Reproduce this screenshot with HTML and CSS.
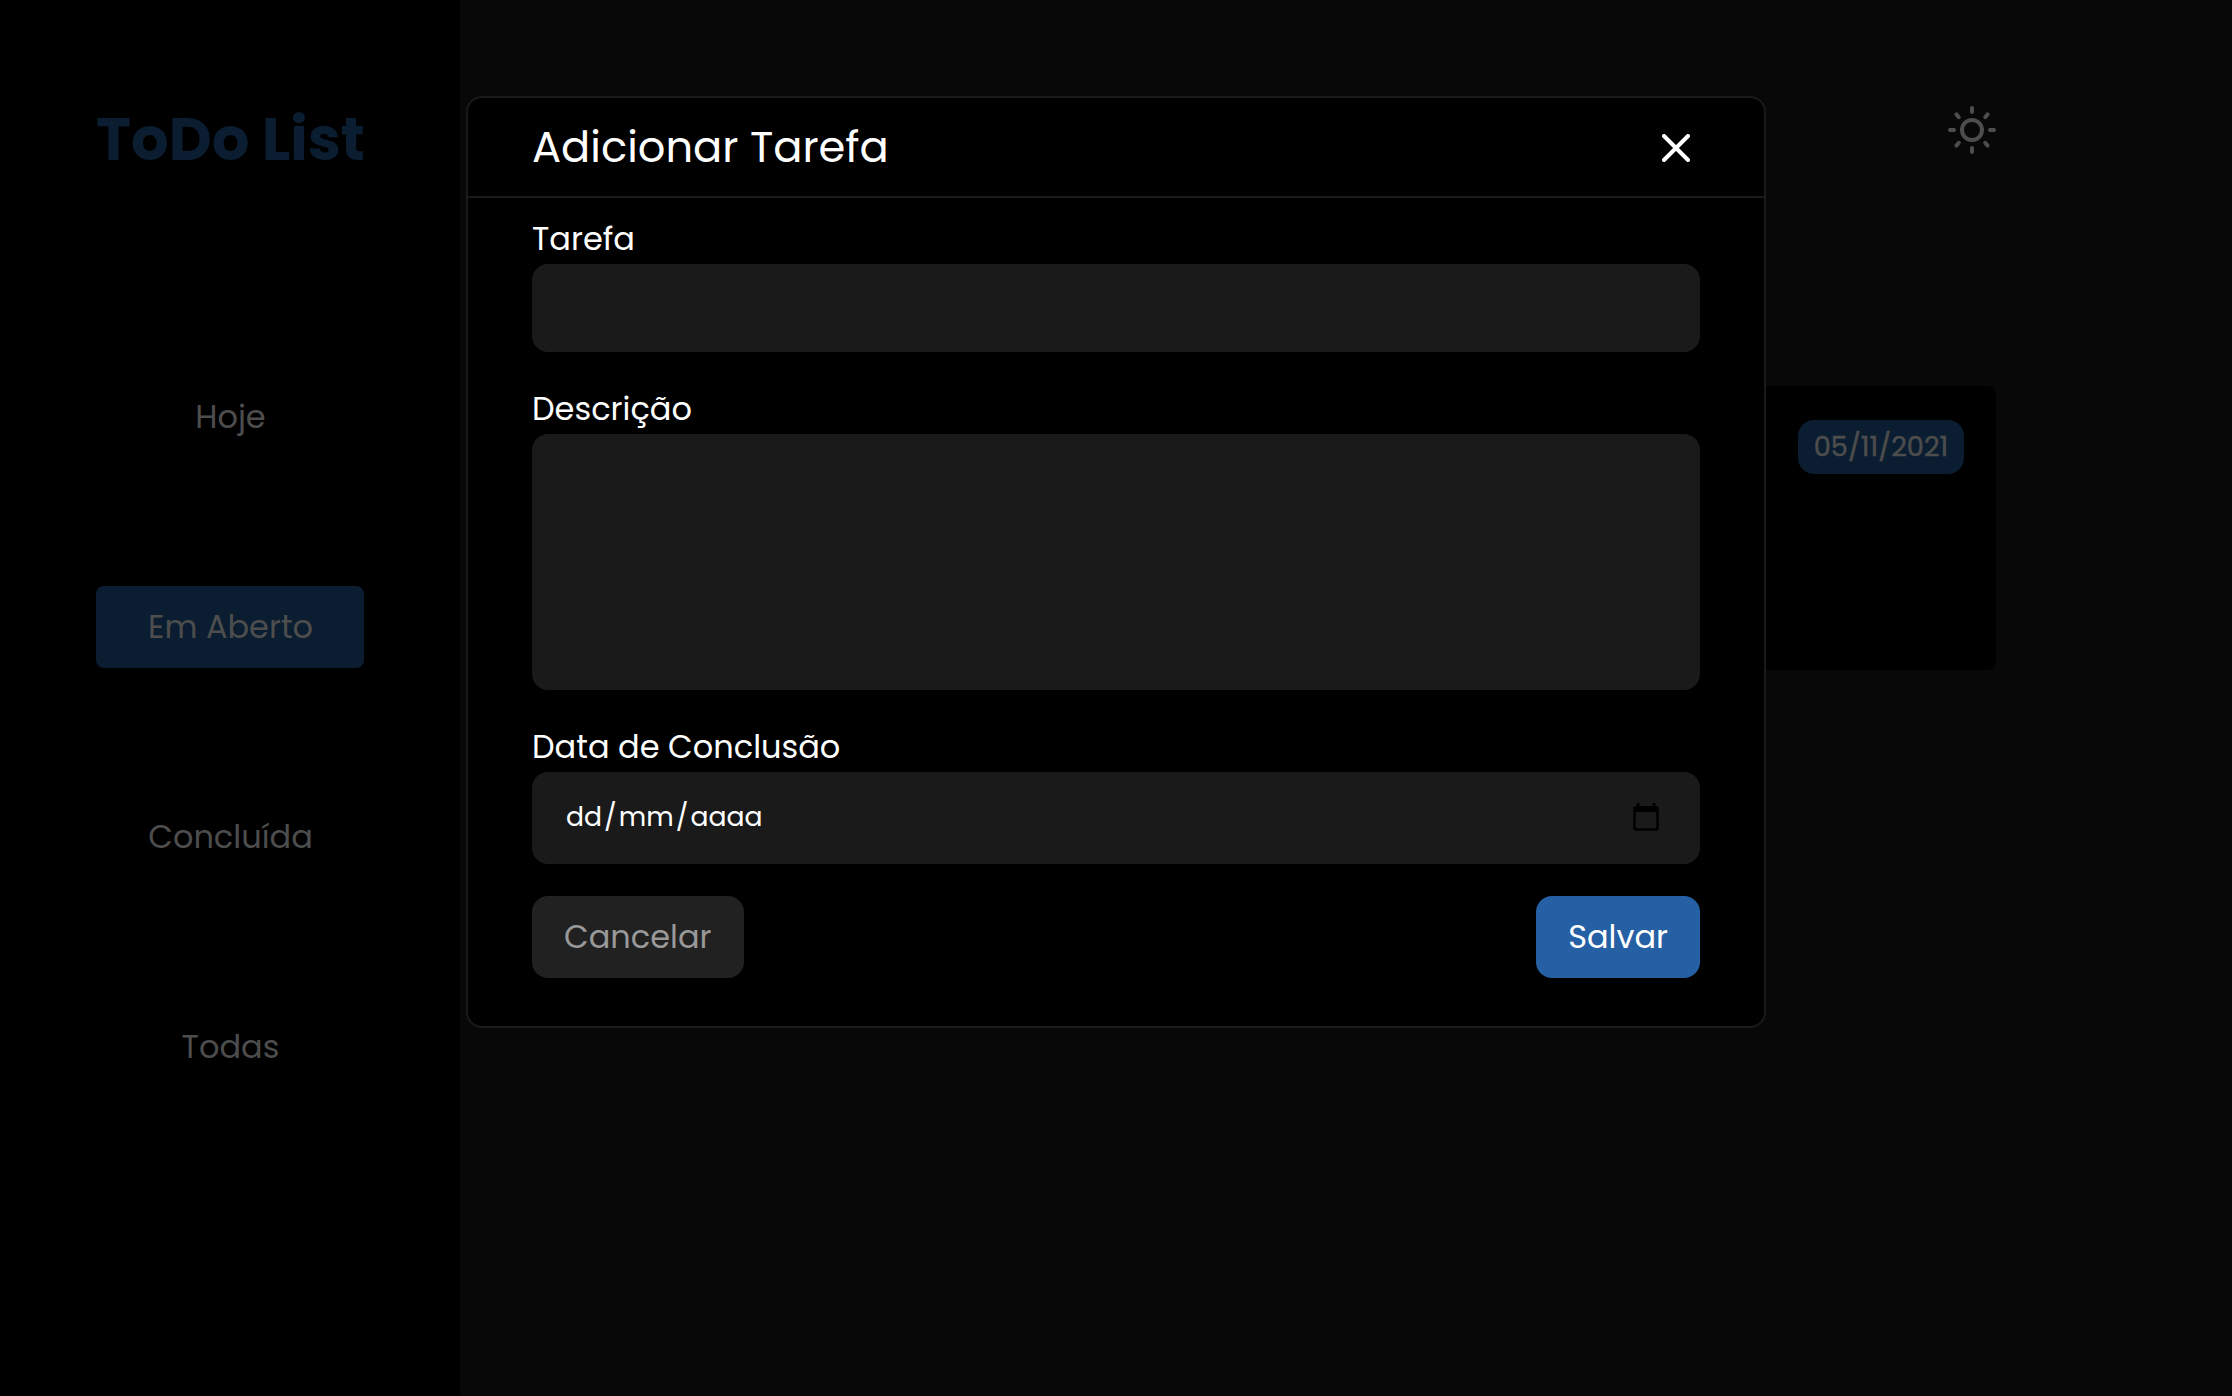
FILE: index.html
```html
<!DOCTYPE html>
<html lang="pt-BR">
<head>
<meta charset="utf-8">
<title>ToDo List</title>
<link rel="stylesheet" href="styles.css">
</head>
<body>
<div class="app">
  <aside class="sidebar">
    <h1 class="logo">ToDo List</h1>
    <nav class="menu">
      <a class="item">Hoje</a>
      <a class="item active">Em Aberto</a>
      <a class="item">Concluída</a>
      <a class="item">Todas</a>
    </nav>
  </aside>
  <main class="content">
    <header class="topbar">
      <svg class="sun" viewBox="0 0 48 48"><circle cx="24" cy="24" r="10"/><path d="M24 2v4M24 42v4M2 24h4M42 24h4M8.400 8.400l2.400 2.800M39.600 8.400l-2.400 2.800M8.400 39.600l2.400-2.800M39.600 39.600l-2.400-2.800"/></svg>
    </header>
    <article class="card"><span class="badge">05/11/2021</span></article>
  </main>
</div>
<section class="modal">
  <header class="modal-head">
    <h2 class="modal-title">Adicionar Tarefa</h2>
    <svg class="close" viewBox="0 0 28 28"><path d="M2 2l24 24M26 2L2 26"/></svg>
  </header>
  <form class="form">
    <div class="label">Tarefa</div>
    <div class="field"></div>
    <div class="label">Descrição</div>
    <div class="field area"></div>
    <div class="label">Data de Conclusão</div>
    <div class="field date">
      <div class="parts"><span>dd</span>/<span>mm</span>/<span>aaaa</span></div>
      <svg class="cal" viewBox="0 0 26 28"><path fill-rule="evenodd" d="M3.500 0h3v3h13V0h3v3h1a2.200 2.200 0 0 1 2.200 2.200v20.300a2.200 2.200 0 0 1-2.200 2.200h-21a2.200 2.200 0 0 1-2.200-2.200V5.200A2.200 2.200 0 0 1 2.500 3h1zM2.800 9v16.200h20.400V9z"/></svg>
    </div>
    <div class="actions">
      <div class="btn cancel">Cancelar</div>
      <div class="btn save">Salvar</div>
    </div>
  </form>
</section>
</body>
</html>
```
FILE: styles.css
```css
* { box-sizing: border-box; margin: 0; padding: 0; }
body {
  background: #080808;
  color: #fff;
  font-family: Poppins, Inter, "Open Sans", sans-serif;
  font-size: 32px;
  white-space: nowrap;
}
.app { display: flex; height: 1396px; color: #4d4d4d; }
.sidebar { width: 460px; padding: 91px 96px 0; background: #000; }
.logo { height: 96px; font-size: 59.2px; line-height: 97px; font-weight: 700; color: #0b1d31; }
.menu { display: flex; flex-direction: column; gap: 128px; margin-top: 189px; }
.item { display: flex; align-items: center; justify-content: center; height: 82px; padding-left: 1px; border-radius: 8px; }
.active { background: #0b1d31; }
.content { flex: 1; padding: 106px 236px 0 128px; }
.topbar { display: flex; justify-content: flex-end; height: 280px; }
.sun { width: 48px; height: 48px; fill: none; stroke: #4d4d4d; stroke-width: 4; stroke-linecap: round; }
.card { display: flex; justify-content: flex-end; align-items: flex-start; height: 284px; padding: 34px 32px; border-radius: 8px; background: #000; }
.badge { display: flex; align-items: center; justify-content: center; width: 166px; height: 54px; border-radius: 16px; background: #0b1d31; font-size: 27.2px; -webkit-text-stroke: 0.5px #4d4d4d; }
.modal { position: absolute; left: 466px; top: 96px; width: 1300px; height: 932px; border: 2px solid #1a1a1a; border-radius: 16px; background: #000; }
.modal-head { display: flex; align-items: center; justify-content: space-between; height: 100px; padding: 0 74px 0 64px; border-bottom: 2px solid #1a1a1a; }
.modal-title { font-size: 43.2px; font-weight: 400; }
.close { width: 28px; height: 28px; margin-top: 2px; fill: none; stroke: #fff; stroke-width: 4; stroke-linecap: round; }
.form { padding: 16px 64px 0; }
.label { height: 50px; line-height: 50px; }
.field { height: 88px; margin-bottom: 32px; border-radius: 16px; background: #1a1a1a; }
.area { height: 256px; }
.date { display: flex; align-items: center; justify-content: space-between; height: 92px; padding: 0 41px 2px 32px; font-size: 26.67px; }
.parts span { padding: 0 2px; }
.cal { width: 26px; height: 28px; fill: #000; }
.actions { display: flex; justify-content: space-between; }
.btn { display: flex; align-items: center; height: 82px; padding: 0 32px; border-radius: 16px; }
.cancel { background: #212121; color: #999; }
.save { background: #2660a4; }
```
